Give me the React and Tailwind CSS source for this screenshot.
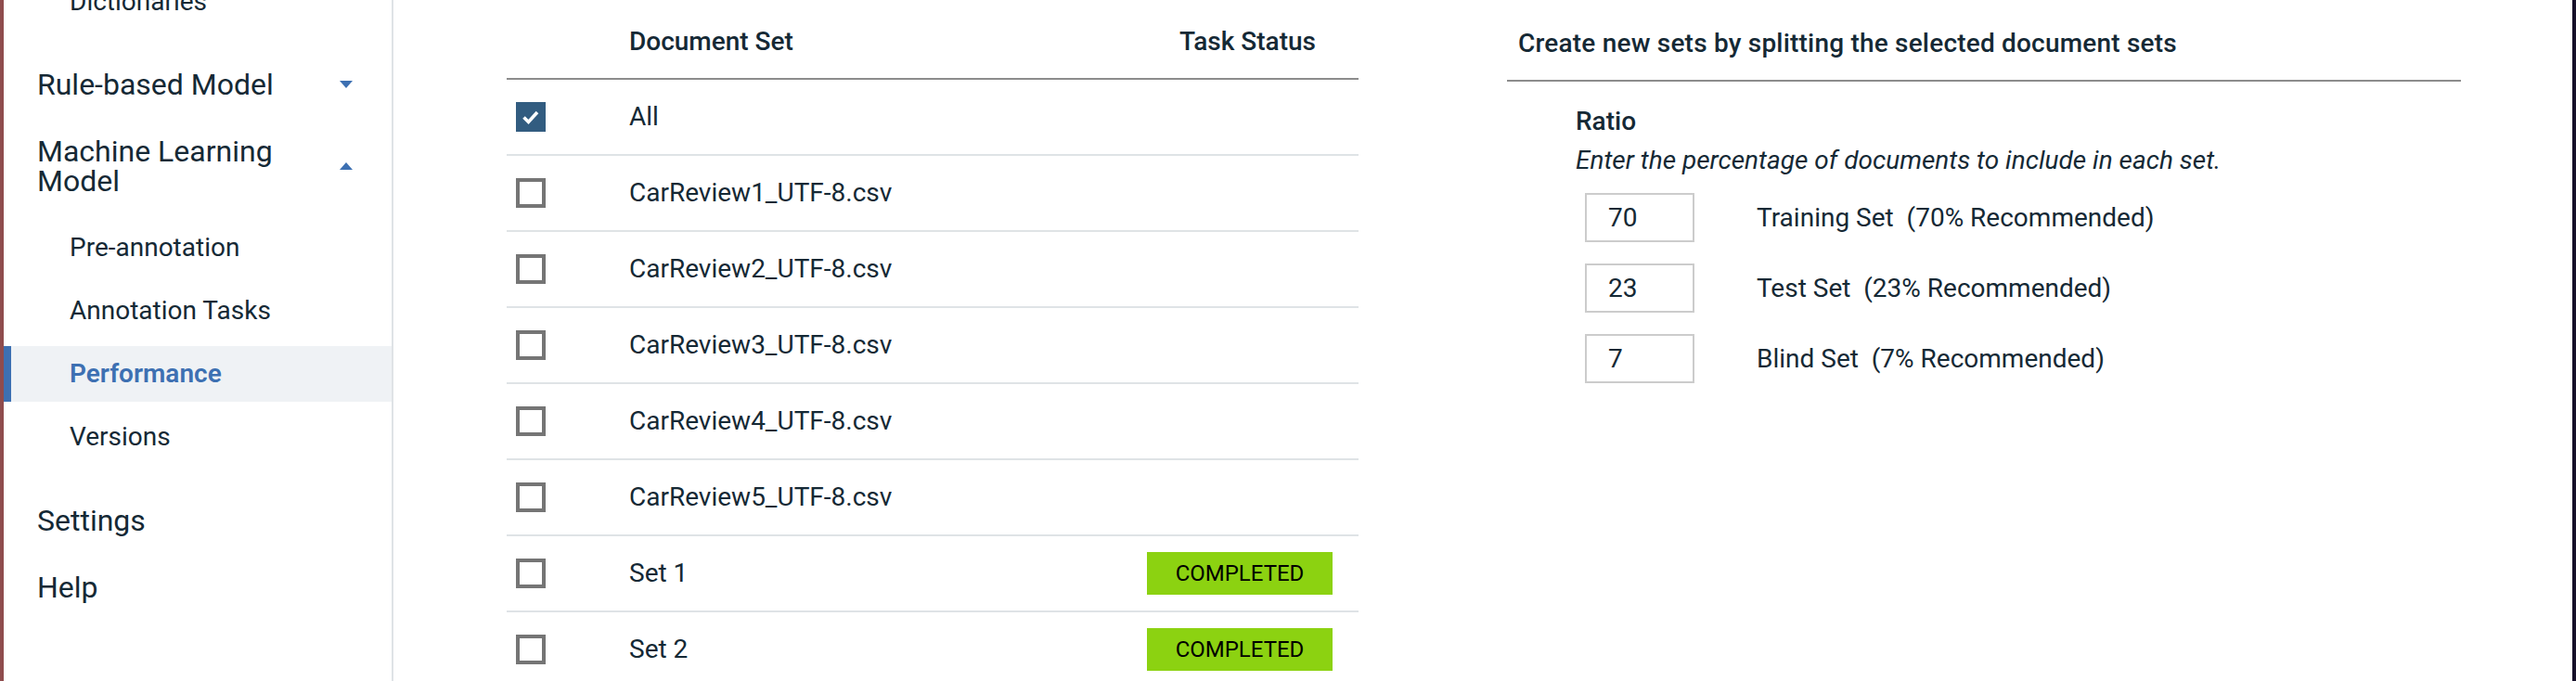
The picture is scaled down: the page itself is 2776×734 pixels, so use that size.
import React from "react";

function Chevron({ up }) {
  return (
    <svg width="14" height="8" viewBox="0 0 14 8" className="shrink-0">
      {up ? (
        <polygon points="0,8 14,8 7,0" fill="#3d70b2" />
      ) : (
        <polygon points="0,0 14,0 7,8" fill="#3d70b2" />
      )}
    </svg>
  );
}

function Checkbox({ checked }) {
  if (checked) {
    return (
      <div className="w-[32px] h-[32px] bg-[#325c80] flex items-center justify-center">
        <svg width="32" height="32" viewBox="0 0 32 32">
          <polyline points="8.5,16.5 13.5,21.5 23,11" fill="none" stroke="#ffffff" strokeWidth="3.6" />
        </svg>
      </div>
    );
  }
  return <div className="w-[32px] h-[32px] border-4 border-[#757575] bg-white" />;
}

const rows = [
  { name: "All", checked: true },
  { name: "CarReview1_UTF-8.csv" },
  { name: "CarReview2_UTF-8.csv" },
  { name: "CarReview3_UTF-8.csv" },
  { name: "CarReview4_UTF-8.csv" },
  { name: "CarReview5_UTF-8.csv" },
  { name: "Set 1", status: "COMPLETED" },
  { name: "Set 2", status: "COMPLETED" },
];

const ratios = [
  { v: "70", label: "Training Set\u00a0\u00a0(70% Recommended)" },
  { v: "23", label: "Test Set\u00a0\u00a0(23% Recommended)" },
  { v: "7", label: "Blind Set\u00a0\u00a0(7% Recommended)" },
];

export default function App() {
  return (
    <div className="flex w-[2776px] h-[734px] overflow-hidden bg-white text-[#152935] font-[Roboto,'Liberation_Sans',sans-serif]">
      <div className="w-[4px] shrink-0 bg-[#8f4c4d]" />
      <aside className="w-[420px] shrink-0 border-r-2 border-[#dfe3e6] flex flex-col">
        <div className="-mt-[28px] h-[60px] flex items-center pl-[71px] text-[28px]">Dictionaries</div>
        <div className="mt-[23px] h-[72px] flex items-center justify-between pl-[36px] pr-[42px] text-[32px]">
          <span>Rule-based Model</span>
          <Chevron />
        </div>
        <div className="h-[104px] flex items-center justify-between pl-[36px] pr-[42px] text-[32px]">
          <span className="w-[300px] leading-[32px]">Machine Learning Model</span>
          <Chevron up />
        </div>
        <div className="mt-[6px] flex flex-col gap-[8px] text-[28px]">
          <div className="h-[60px] flex items-center pl-[71px]">Pre-annotation</div>
          <div className="h-[60px] flex items-center pl-[71px]">Annotation Tasks</div>
          <div className="h-[60px] flex items-center pl-[63px] border-l-[8px] border-[#3d70b2] bg-[#eff2f5] text-[#3d70b2] font-semibold">
            Performance
          </div>
          <div className="h-[60px] flex items-center pl-[71px]">Versions</div>
        </div>
        <div className="mt-[24px] h-[72px] flex items-center pl-[36px] text-[32px]">Settings</div>
        <div className="h-[72px] flex items-center pl-[36px] text-[32px]">Help</div>
      </aside>

      <main className="flex-1 flex pl-[122px]">
        <div className="w-[918px] shrink-0 flex flex-col">
          <div className="w-[43px] h-[2px] bg-[#9fbbe3]" />
          <div className="h-[86px] shrink-0 border-b-2 border-[#8c8c8c] flex items-center pt-[6px] text-[28px] font-medium">
            <div className="w-[132px]" />
            <div className="flex-1">Document Set</div>
            <div className="pr-[46px]">Task Status</div>
          </div>
          {rows.map((r) => (
            <div key={r.name} className="h-[82px] shrink-0 border-b-2 border-[#dfe3e6] flex items-center text-[28px]">
              <div className="w-[132px] pl-[10px]">
                <Checkbox checked={r.checked} />
              </div>
              <div className="flex-1">{r.name}</div>
              {r.status && (
                <div className="pr-[28px]">
                  <div className="w-[200px] h-[46px] bg-[#8cd211] text-black text-[24px] flex items-center justify-center">
                    {r.status}
                  </div>
                </div>
              )}
            </div>
          ))}
        </div>

        <div className="ml-[160px] w-[1028px] shrink-0 flex flex-col">
          <div className="h-[88px] shrink-0 border-b-2 border-[#8c8c8c] flex items-center pl-[12px] pt-[8px] text-[28px] font-medium tracking-[0.2px]">
            Create new sets by splitting the selected document sets
          </div>
          <div className="pl-[74px] flex flex-col text-[28px]">
            <div className="mt-[23px] leading-[40px] font-medium">Ratio</div>
            <div className="mt-[2px] leading-[40px] italic">Enter the percentage of documents to include in each set.</div>
            <div className="mt-[15px] pl-[10px] flex flex-col gap-[23px]">
              {ratios.map((q) => (
                <div key={q.v} className="flex items-center">
                  <div className="w-[118px] h-[53px] border-2 border-[#cccccc] flex items-center pl-[23px]">{q.v}</div>
                  <div className="ml-[67px]">{q.label}</div>
                </div>
              ))}
            </div>
          </div>
        </div>
      </main>
      <div className="w-[4px] shrink-0 bg-[#15102a]" />
    </div>
  );
}
